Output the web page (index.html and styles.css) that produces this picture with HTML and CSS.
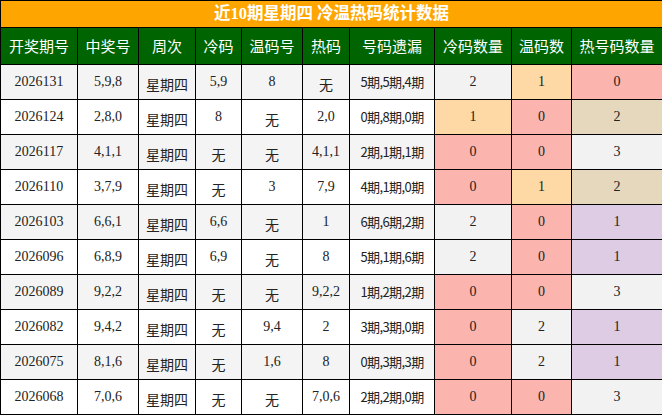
FILE: index.html
```html
<!DOCTYPE html>
<html lang="zh">
<head>
<meta charset="utf-8">
<link rel="stylesheet" href="styles.css">
</head>
<body>
<table class="stats">
  <colgroup>
    <col class="c1"><col class="c2"><col class="c3"><col class="c4"><col class="c5">
    <col class="c6"><col class="c7"><col class="c8"><col class="c9"><col class="c10">
  </colgroup>
  <thead>
    <tr class="title-row"><th colspan="10">近10期星期四 冷温热码统计数据</th></tr>
    <tr class="head-row">
      <th>开奖期号</th><th>中奖号</th><th>周次</th><th>冷码</th><th>温码号</th>
      <th>热码</th><th>号码遗漏</th><th>冷码数量</th><th>温码数</th><th>热号码数量</th>
    </tr>
  </thead>
  <tbody>
    <tr class="odd"><td>2026131</td><td>5,9,8</td><td class="cjk">星期四</td><td>5,9</td><td>8</td><td class="cjk">无</td><td class="miss">5期,5期,4期</td><td class="gray">2</td><td class="peach">1</td><td class="pink">0</td></tr>
    <tr><td>2026124</td><td>2,8,0</td><td class="cjk">星期四</td><td>8</td><td class="cjk">无</td><td>2,0</td><td class="miss">0期,8期,0期</td><td class="peach">1</td><td class="pink">0</td><td class="tan">2</td></tr>
    <tr class="odd"><td>2026117</td><td>4,1,1</td><td class="cjk">星期四</td><td class="cjk">无</td><td class="cjk">无</td><td>4,1,1</td><td class="miss">2期,1期,1期</td><td class="pink">0</td><td class="pink">0</td><td class="gray">3</td></tr>
    <tr><td>2026110</td><td>3,7,9</td><td class="cjk">星期四</td><td class="cjk">无</td><td>3</td><td>7,9</td><td class="miss">4期,1期,0期</td><td class="pink">0</td><td class="peach">1</td><td class="tan">2</td></tr>
    <tr class="odd"><td>2026103</td><td>6,6,1</td><td class="cjk">星期四</td><td>6,6</td><td class="cjk">无</td><td>1</td><td class="miss">6期,6期,2期</td><td class="gray">2</td><td class="pink">0</td><td class="lav">1</td></tr>
    <tr><td>2026096</td><td>6,8,9</td><td class="cjk">星期四</td><td>6,9</td><td class="cjk">无</td><td>8</td><td class="miss">5期,1期,6期</td><td class="gray">2</td><td class="pink">0</td><td class="lav">1</td></tr>
    <tr class="odd"><td>2026089</td><td>9,2,2</td><td class="cjk">星期四</td><td class="cjk">无</td><td class="cjk">无</td><td>9,2,2</td><td class="miss">1期,2期,2期</td><td class="pink">0</td><td class="pink">0</td><td class="gray">3</td></tr>
    <tr><td>2026082</td><td>9,4,2</td><td class="cjk">星期四</td><td class="cjk">无</td><td>9,4</td><td>2</td><td class="miss">3期,3期,0期</td><td class="pink">0</td><td class="gray">2</td><td class="lav">1</td></tr>
    <tr class="odd"><td>2026075</td><td>8,1,6</td><td class="cjk">星期四</td><td class="cjk">无</td><td>1,6</td><td>8</td><td class="miss">0期,3期,3期</td><td class="pink">0</td><td class="gray">2</td><td class="lav">1</td></tr>
    <tr><td>2026068</td><td>7,0,6</td><td class="cjk">星期四</td><td class="cjk">无</td><td class="cjk">无</td><td>7,0,6</td><td class="miss">2期,2期,0期</td><td class="pink">0</td><td class="pink">0</td><td class="gray">3</td></tr>
  </tbody>
</table>
</body>
</html>
```
FILE: styles.css
```css
html, body {
  margin: 0;
  padding: 0;
  background: #ffffff;
}

.stats {
  width: 662px;
  border-collapse: collapse;
  table-layout: fixed;
  font-family: "Liberation Serif", "Noto Sans CJK SC", serif;
  font-size: 14px;
  color: #222222;
}

.c1 { width: 77px; }
.c2 { width: 61px; }
.c3 { width: 57px; }
.c4 { width: 46px; }
.c5 { width: 61px; }
.c6 { width: 47px; }
.c7 { width: 85px; }
.c8 { width: 77px; }
.c9 { width: 60px; }
.c10 { width: 91px; }

.stats th,
.stats td {
  border: 1px solid #000000;
  padding: 0;
  text-align: center;
  vertical-align: middle;
  line-height: 18px;
}

.title-row th {
  height: 26px;
  background: #ffa500;
  color: #ffffff;
  font-size: 16.5px;
  font-weight: bold;
  font-family: "Liberation Serif", "Noto Sans CJK SC", serif;
}

.head-row th {
  height: 36px;
  background: #006400;
  color: #ffffff;
  font-weight: normal;
  font-size: 15px;
  font-family: "Noto Sans CJK SC", sans-serif;
}

.stats td {
  height: 34px;
  background: #ffffff;
}

.stats tr.odd td {
  background: #f4f4f4;
}

.stats td.cjk {
  font-family: "Noto Sans CJK SC", sans-serif;
  font-size: 14px;
  height: 31px;
  padding-top: 3px;
}

.stats td.miss {
  font-family: "Noto Sans CJK SC", sans-serif;
  font-size: 13px;
  letter-spacing: -0.6px;
}

.stats tr td.gray { background: #f2f2f2; }
.stats tr td.pink { background: #fbb4ae; }
.stats tr td.peach { background: #fed9a6; }
.stats tr td.tan { background: #e5d8bd; }
.stats tr td.lav { background: #decbe4; }
```
